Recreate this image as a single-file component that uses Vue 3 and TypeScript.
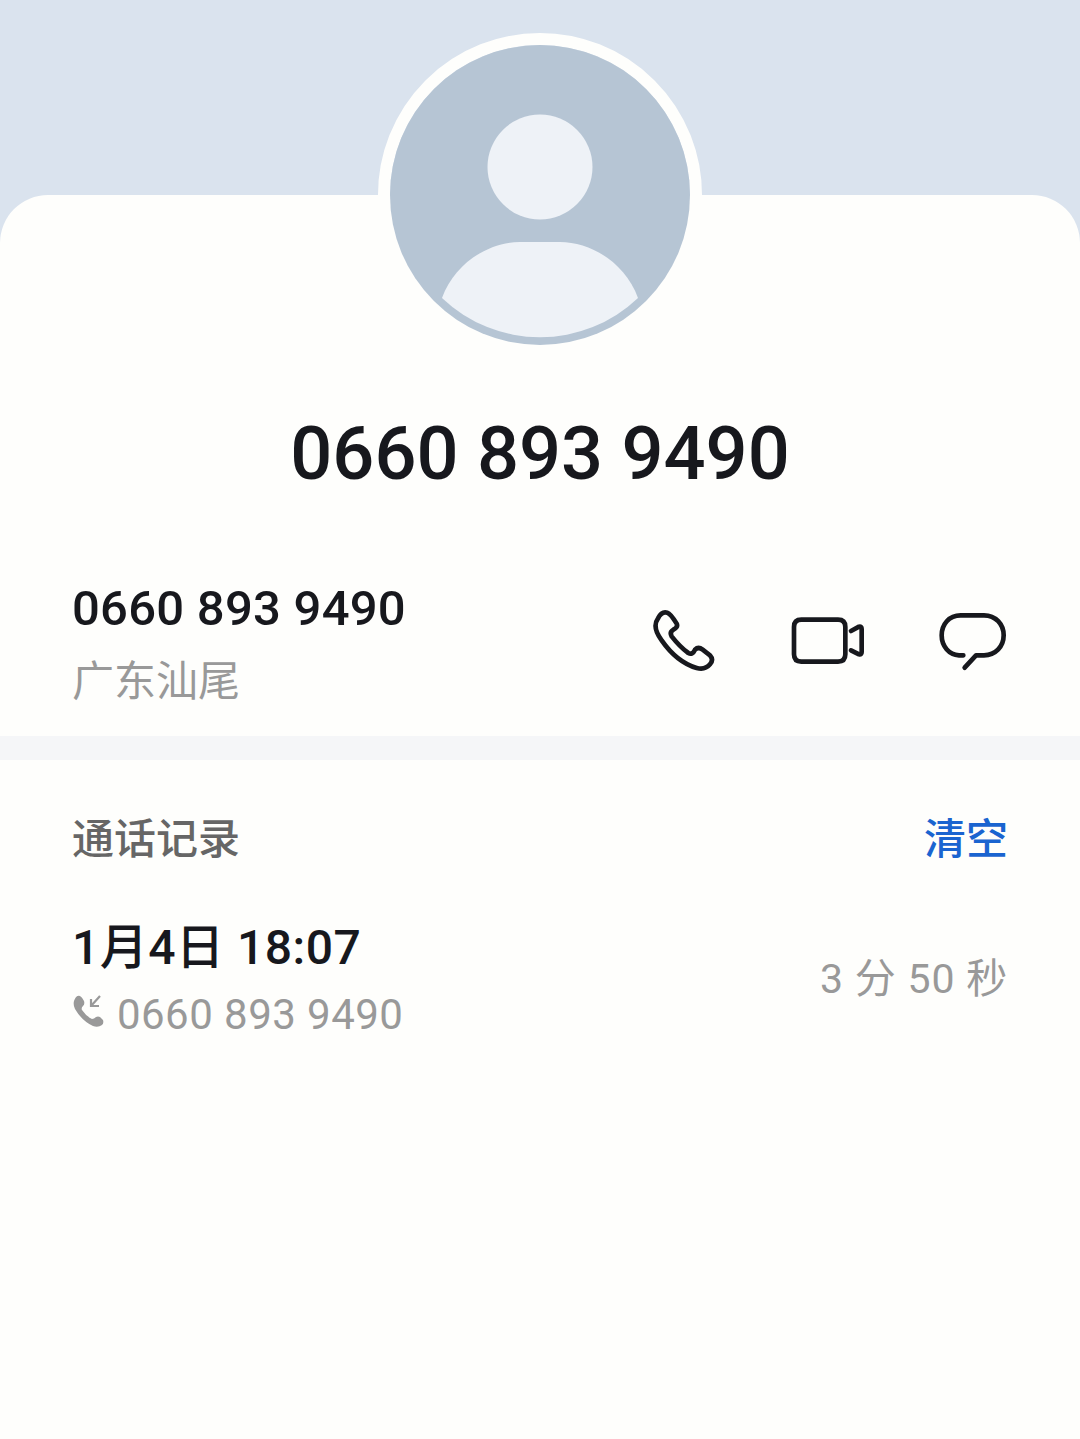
<template>
  <div class="page">
    <div class="banner"></div>
    <div class="sheet">
      <div class="avatar">
        <svg viewBox="0 0 300 300" width="300" height="300">
          <circle cx="150" cy="150" r="150" fill="#b6c5d4" />
          <circle cx="150" cy="122" r="52.5" fill="#eef2f7" />
          <path d="M52 253C65 217 100 197 130 197H170C200 197 235 217 248 253A142 142 0 0 1 52 253Z" fill="#eef2f7" />
        </svg>
      </div>
      <h1 class="title">{{ phone }}</h1>

      <div class="contact">
        <div class="contact-info">
          <div class="contact-number">{{ phone }}</div>
          <div class="contact-place">广东汕尾</div>
        </div>
        <div class="actions">
          <svg class="icon-phone" viewBox="0 0 210 210" width="70" height="70">
            <path transform="translate(-60 -50)" d="M84 84Q95 62 112 67Q122 70 140 100Q145 110 130 118Q118 125 125 138Q150 170 175 188Q187 195 195 178Q205 168 218 178L240 195Q252 208 240 222Q225 240 200 233Q140 215 95 150Q65 110 84 84Z" />
          </svg>
          <svg class="icon-video" viewBox="0 0 240 150" width="80" height="50">
            <path transform="translate(-475 -75)" d="M515 86H625Q647 86 647 108V190Q647 212 625 212H515Q493 212 493 190V108Q493 86 515 86Z" />
            <path transform="translate(-475 -75)" d="M664 120L688 107Q696 105 696 114V183Q696 192 688 190L664 178" />
          </svg>
          <svg class="icon-chat" viewBox="0 0 210 180" width="70" height="60">
            <path transform="translate(-925 -65)" d="M998 195H985C955 193 933 168 933 135C933 102 955 75 990 75H1060C1095 75 1119 102 1119 135C1119 168 1095 195 1060 195H1036L1002 232" />
          </svg>
        </div>
      </div>

      <div class="divider"></div>

      <section class="records">
        <div class="records-head">
          <span class="records-title">通话记录</span>
          <span class="records-clear">清空</span>
        </div>
        <div v-for="call in calls" :key="call.id" class="call">
          <div>
            <div class="call-time">{{ call.time }}</div>
            <div class="call-number">
              <svg viewBox="0 0 32 32" width="32" height="32">
                <path d="M2 6Q4 0 8 1Q10 2 12 6Q13 9 11 11Q9 13 10 15Q14 21 20 24Q22 24 24 22Q26 21 28 22L31 25Q32 28 30 30Q26 33 21 31Q10 26 3 14Q1 10 2 6Z" fill="#999" />
                <path d="M28 1L19 11M19 4V11H27" fill="none" stroke="#999" stroke-width="2.2" />
              </svg>
              <span>{{ call.number }}</span>
            </div>
          </div>
          <div class="call-duration">{{ call.duration }}</div>
        </div>
      </section>
    </div>
  </div>
</template>

<script setup lang="ts">
const phone = '0660 893 9490'

const calls = [
  { id: 1, time: '1月4日 18:07', number: phone, duration: '3 分 50 秒' },
]
</script>

<style>
html,
body {
  background: #fefefc;
}
</style>

<style scoped>
.page {
  height: 1439px;
  overflow: hidden;
  background: #dae3ee;
  font-family: Roboto, "Noto Sans CJK SC", sans-serif;
}

.banner {
  height: 195px;
}

.sheet {
  display: flow-root;
  height: 1244px;
  background: #fefefc;
  border-radius: 48px 48px 0 0;
}

.avatar {
  width: 300px;
  height: 300px;
  margin: -162px auto 0;
  border: 12px solid #fefefc;
  border-radius: 50%;
}

.avatar svg {
  display: block;
}

.title {
  margin: 52px 0 0;
  text-align: center;
  font-size: 74px;
  line-height: 90px;
  font-weight: 500;
  color: #17181d;
}

.contact {
  display: flex;
  justify-content: space-between;
  align-items: center;
  margin-top: 47px;
  padding: 0 72px;
  height: 190px;
}

.contact-info {
  margin-top: 4px;
}

.contact-number {
  font-size: 49px;
  line-height: 60px;
  font-weight: 500;
  letter-spacing: 0.25px;
  color: #17181d;
}

.contact-place {
  margin-top: 18px;
  font-size: 42px;
  line-height: 50px;
  color: #999;
}

.actions {
  display: flex;
  align-items: center;
  gap: 70px;
  margin-top: 2px;
  margin-right: -1px;
}

.actions svg {
  fill: none;
  stroke: #17181d;
  stroke-width: 14;
  stroke-linecap: round;
  stroke-linejoin: round;
}

.actions .icon-phone {
  margin-right: -2px;
}

.actions .icon-video {
  margin-top: -2px;
  margin-right: 1px;
}

.divider {
  height: 24px;
  background: #f5f6f8;
}

.records {
  padding: 0 72px;
}

.records-head {
  display: flex;
  justify-content: space-between;
  align-items: center;
  margin-top: 54px;
  font-size: 42px;
  line-height: 52px;
  font-weight: 500;
}

.records-title {
  color: #666;
}

.records-clear {
  color: #1a64d0;
}

.call {
  display: flex;
  justify-content: space-between;
  align-items: center;
  margin-top: 52px;
}

.call-time {
  font-size: 48px;
  line-height: 60px;
  font-weight: 500;
  letter-spacing: 0.5px;
  color: #17181d;
}

.call-number {
  display: flex;
  align-items: center;
  gap: 13px;
  margin-top: 9px;
  font-size: 42px;
  line-height: 56px;
  letter-spacing: 0.45px;
  color: #999;
}

.call-number svg {
  margin-top: -8px;
}

.call-duration {
  margin-bottom: 12px;
  font-size: 41px;
  letter-spacing: 0.8px;
  color: #999;
}
</style>
